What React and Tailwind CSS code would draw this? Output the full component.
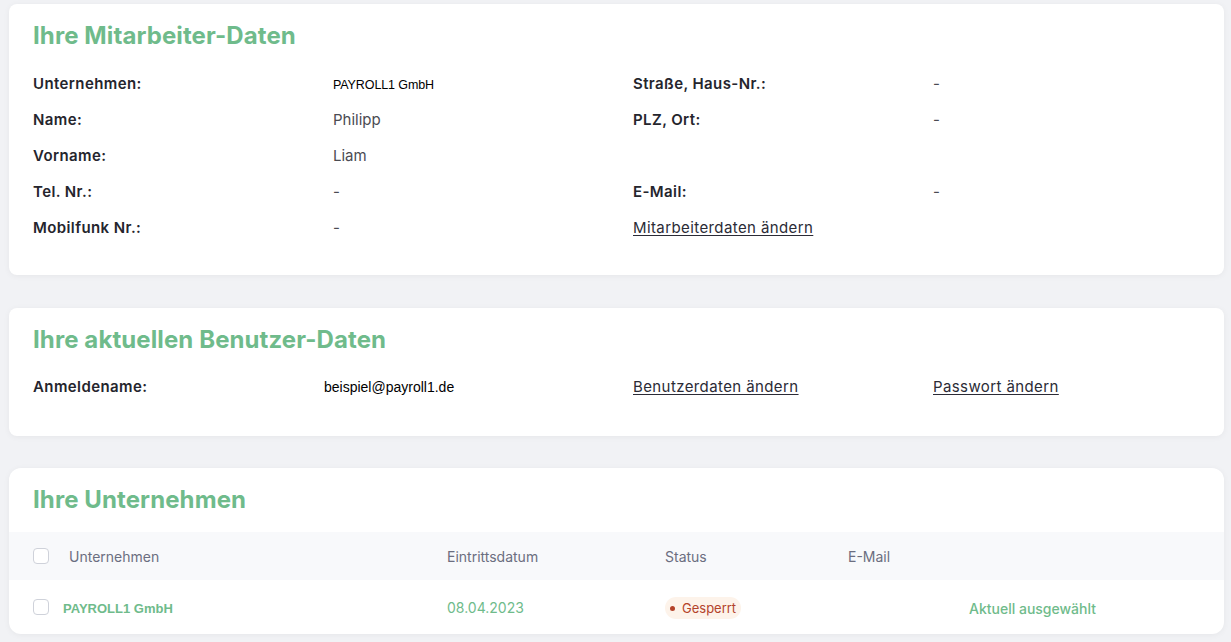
export default function App() {
  const font = { fontFamily: 'Inter, "Noto Sans", sans-serif' };
  const rows = [
    ['Unternehmen:', <span className="text-[12.5px] text-black tracking-[-0.1px]" style={{ fontFamily: '"Liberation Sans", Arial, sans-serif' }}>PAYROLL1 GmbH</span>, 'Straße, Haus-Nr.:', '-'],
    ['Name:', 'Philipp', 'PLZ, Ort:', '-'],
    ['Vorname:', 'Liam', '', ''],
    ['Tel. Nr.:', '-', 'E-Mail:', '-'],
    ['Mobilfunk Nr.:', '-', 'link', ''],
  ];

  return (
    <div className="min-h-screen bg-[#f1f2f5] pl-[9px] pr-[7px] pt-[4px] pb-4" style={font}>
      <div className="rounded-lg bg-white shadow-[0_1px_6px_rgba(0,0,0,0.05)] px-6 pt-4 pb-[29px]">
        <h2 className="text-[24px] leading-8 font-bold text-[#6fbb8b] tracking-[0.1px]">Ihre Mitarbeiter-Daten</h2>
        <div className="mt-[14px]">
          {rows.map((r, i) => (
            <div key={i} className="grid grid-cols-[300px_300px_300px_1fr] h-9 items-center text-[15px] tracking-[0.4px]">
              <div className="font-semibold text-[#25252d]">{r[0]}</div>
              <div className="text-[#4b4b52] tracking-normal">{r[1]}</div>
              <div className="font-semibold text-[#25252d]">
                {r[2] === 'link' ? (
                  <a href="#" className="font-normal underline underline-offset-2 text-[#2b2b36]">Mitarbeiterdaten ändern</a>
                ) : r[2]}
              </div>
              <div className="text-[#4b4b52]">{r[3]}</div>
            </div>
          ))}
        </div>
      </div>

      <div className="mt-[33px] rounded-lg bg-white shadow-[0_1px_6px_rgba(0,0,0,0.05)] px-6 pt-4 pb-[31px]">
        <h2 className="text-[24px] leading-8 font-bold text-[#6fbb8b] tracking-[0.1px]">Ihre aktuellen Benutzer-Daten</h2>
        <div className="mt-[13px] grid grid-cols-[300px_300px_300px_1fr] h-9 items-center text-[15px] tracking-[0.4px]">
          <div className="font-semibold text-[#25252d]">Anmeldename:</div>
          <div className="text-[14px] text-black tracking-normal" style={{ fontFamily: '"Liberation Sans", Arial, sans-serif' }}>
            <span className="-ml-[9px]">beispiel@payroll1.de</span>
          </div>
          <div className="pt-[1px]"><a href="#" className="underline underline-offset-2 text-[#2b2b36]">Benutzerdaten ändern</a></div>
          <div className="pt-[1px]"><a href="#" className="underline underline-offset-2 text-[#2b2b36]">Passwort ändern</a></div>
        </div>
      </div>

      <div className="mt-[32px] rounded-xl bg-white shadow-[0_1px_6px_rgba(0,0,0,0.05)] pt-4 overflow-hidden">
        <h2 className="px-6 text-[24px] leading-8 font-bold text-[#6fbb8b] tracking-[0.1px]">Ihre Unternehmen</h2>
        <div className="mt-4 bg-[#f8f9fb] h-12 px-6 grid grid-cols-[414px_218px_183px_121px_1fr] items-center text-[14px] text-[#6b6e80]">
          <div className="flex items-center gap-[20px]">
            <span className="w-4 h-4 rounded border border-[#cfd2da] bg-white"></span>
            <span>Unternehmen</span>
          </div>
          <div>Eintrittsdatum</div>
          <div>Status</div>
          <div>E-Mail</div>
          <div></div>
        </div>
        <div className="h-[54px] px-6 grid grid-cols-[414px_218px_183px_121px_1fr] items-center text-[14px]">
          <div className="flex items-center gap-[14px]">
            <span className="w-4 h-4 rounded border border-[#cfd2da] bg-white"></span>
            <span className="text-[13px] font-bold text-[#6fbb8b] pt-[4px]" style={{ fontFamily: '"Liberation Sans", Arial, sans-serif' }}>PAYROLL1 GmbH</span>
          </div>
          <div className="text-[#6fbb8b]">08.04.2023</div>
          <div>
            <span className="inline-flex items-center gap-[7px] rounded-full bg-[#fdf3ea] px-[5px] h-[22px] text-[13px] text-[#b4432a]">
              <span className="w-[5px] h-[5px] rounded-full bg-[#b4432a]"></span>
              Gesperrt
            </span>
          </div>
          <div></div>
          <div className="text-[14px] font-medium text-[#6fbb8b] pt-[2px]">Aktuell ausgewählt</div>
        </div>
      </div>
    </div>
  );
}
